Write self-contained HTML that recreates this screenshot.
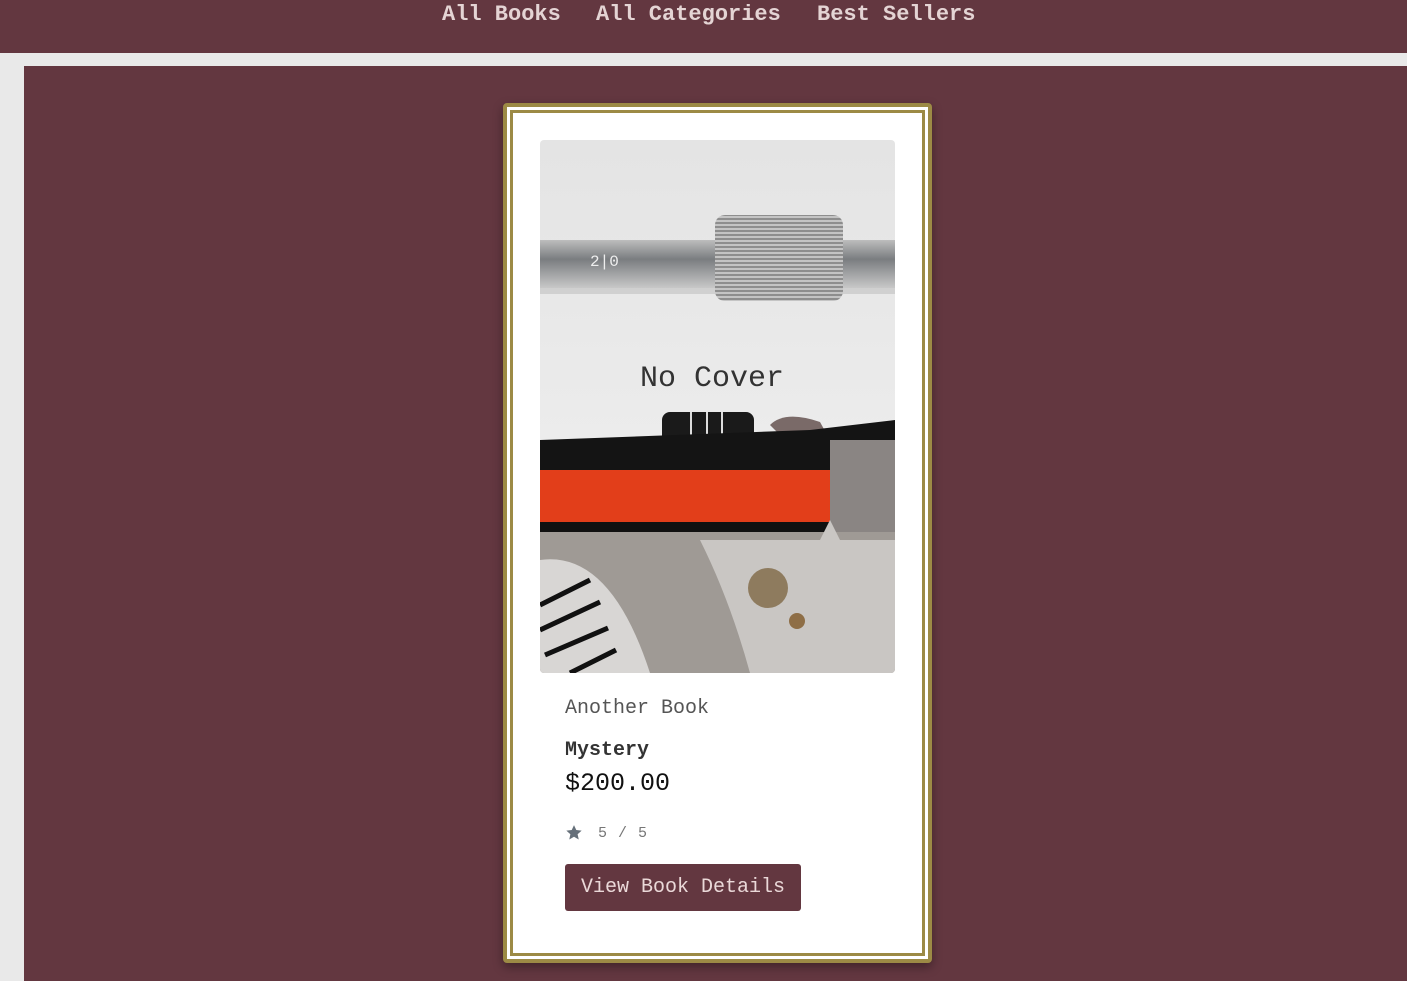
<!DOCTYPE html>
<html><head><style>
*{margin:0;padding:0;box-sizing:border-box}
body{width:1407px;height:981px;overflow:hidden;background:#e9e9e9;font-family:"Liberation Mono","Courier New",monospace;position:relative}
.nav{position:absolute;left:0;top:0;width:1407px;height:53px;background:#633740}
.nav span{position:absolute;top:2px;font-weight:bold;font-size:22px;color:#e4d4d4}
.main{position:absolute;left:24px;top:66px;width:1383px;height:915px;background:#633740}
.card{position:absolute;left:503px;top:103px;width:429px;height:860px;background:#fff;border:4px solid #9c8a45;border-radius:4px;box-shadow:0 4px 10px rgba(0,0,0,.35)}
.inner{position:absolute;left:3px;top:3px;right:3px;bottom:3px;border:3px solid #9c8a45}
.img{position:absolute;left:540px;top:140px;width:355px;height:533px;border-radius:4px;overflow:hidden}
.t{position:absolute;left:565px}
</style></head><body>
<div class="nav">
<span style="left:442px">All Books</span>
<span style="left:596px">All Categories</span>
<span style="left:817px">Best Sellers</span>
</div>
<div class="main"></div>
<div class="card"><div class="inner"></div></div>
<div class="img">
<svg width="355" height="533" viewBox="0 0 355 533">
<defs>
<linearGradient id="bg" x1="0" y1="0" x2="0" y2="1"><stop offset="0" stop-color="#e4e4e4"/><stop offset="1" stop-color="#f2f2f2"/></linearGradient>
<linearGradient id="bar" x1="0" y1="0" x2="0" y2="1"><stop offset="0" stop-color="#bdbdbd"/><stop offset=".4" stop-color="#7a7d80"/><stop offset="1" stop-color="#c8c8c8"/></linearGradient>
<pattern id="st" width="4" height="4" patternUnits="userSpaceOnUse"><rect width="4" height="2" fill="#c4c4c4"/><rect y="2" width="4" height="2" fill="#8e8e8e"/></pattern>
</defs>
<rect width="355" height="533" fill="url(#bg)"/>
<rect x="0" y="100" width="355" height="48" fill="url(#bar)"/>
<rect x="0" y="148" width="355" height="6" fill="#d0d0d0"/>
<text x="50" y="126" font-size="16" fill="#eee" font-family="Liberation Mono">2|0</text>
<rect x="175" y="75" width="128" height="86" rx="10" fill="url(#st)"/>
<text x="100" y="246" font-size="30" fill="#333" font-family="Liberation Mono">No Cover</text>
<rect x="122" y="272" width="92" height="40" rx="8" fill="#1a1a1a"/>
<rect x="150" y="272" width="2" height="25" fill="#ddd"/><rect x="166" y="272" width="2" height="25" fill="#ddd"/><rect x="181" y="272" width="2" height="25" fill="#ddd"/>
<path d="M230 285 Q245 270 280 282 L290 300 L265 320 Z" fill="#7a6a68"/>
<path d="M0 300 L270 290 L355 280 L355 330 L270 330 L0 330 Z" fill="#141414"/>
<rect x="0" y="330" width="290" height="52" fill="#e23e1a"/>
<rect x="0" y="382" width="290" height="10" fill="#111"/>
<rect x="290" y="300" width="65" height="100" fill="#8a8583"/>
<path d="M0 392 L355 392 L355 533 L0 533 Z" fill="#9f9a95"/>
<path d="M160 400 L280 400 L290 380 L300 400 L355 400 L355 533 L210 533 Q190 460 160 400 Z" fill="#c9c6c3"/>
<circle cx="228" cy="448" r="20" fill="#8e7b5e"/>
<circle cx="257" cy="481" r="8" fill="#8e6e46"/>
<path d="M0 420 Q70 410 110 533 L0 533 Z" fill="#d8d6d4"/>
<g stroke="#111" stroke-width="5"><line x1="0" y1="465" x2="50" y2="440"/><line x1="0" y1="490" x2="60" y2="462"/><line x1="5" y1="515" x2="68" y2="488"/><line x1="30" y1="533" x2="76" y2="510"/></g>
</svg>
</div>
<div class="t" style="top:697px;font-size:20px;color:#555">Another Book</div>
<div class="t" style="top:739px;font-size:20px;font-weight:bold;color:#333">Mystery</div>
<div class="t" style="top:769px;font-size:25px;color:#111">$200.00</div>
<svg class="t" style="top:824px" width="18" height="17" viewBox="0 0 24 24"><path d="M12 1.5l3.2 7 7.6.8-5.7 5.1 1.6 7.5L12 18l-6.7 3.9 1.6-7.5L1.2 9.3l7.6-.8z" fill="#66707a"/></svg>
<div style="position:absolute;left:598px;top:825px;font-size:15px;letter-spacing:1px;color:#777">5 / 5</div>
<div style="position:absolute;left:565px;top:864px;width:236px;height:47px;background:#633740;border-radius:3px;color:#ead8d8;font-size:20px;line-height:47px;text-align:center">View Book Details</div>
</body></html>
